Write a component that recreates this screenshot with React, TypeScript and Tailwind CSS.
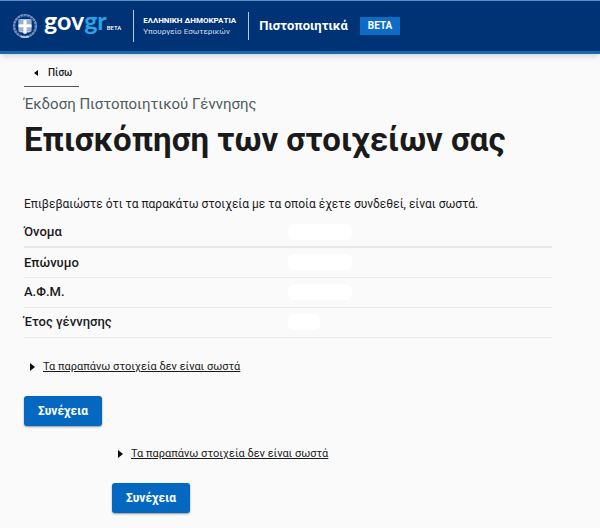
const ROWS = [
  { key: 'name', label: 'Όνομα', valueWidth: 'w-16', line: 'border-b-2 border-[#e6e6e6]' },
  { key: 'surname', label: 'Επώνυμο', valueWidth: 'w-16', line: 'border-b border-[#ebebeb]' },
  { key: 'afm', label: 'Α.Φ.Μ.', valueWidth: 'w-16', line: 'border-b border-[#ebebeb]' },
  { key: 'year', label: 'Έτος γέννησης', valueWidth: 'w-8', line: 'border-b border-[#ebebeb]' },
];

function Emblem() {
  return (
    <svg className="size-[26px] shrink-0" viewBox="0 0 26 26" fill="none" role="img" aria-label="Εθνόσημο">
      <circle cx="13" cy="13" r="10.800" stroke="#9fb6d8" strokeWidth="2.6" strokeDasharray="2.6 0.7" opacity="0.6" />
      <circle cx="13" cy="13" r="11.400" stroke="#8aa5cf" strokeWidth="1" opacity="0.6" />
      <path d="M6.500 6.500q3.200-1 6.500 0q3.300-1 6.500 0v11.500q-1 1.500-4 1.500l-2.500 1.500l-2.500-1.500q-3 0-4-1.500z" fill="#b9cbe6" />
      <path d="M7 8h4.500M7 10h4.500M14.500 8H19M14.500 10H19M7 15.200h4.500M7 17.200h4.500M14.500 15.200H19M14.500 17.200H19" stroke="#7391c6" strokeWidth="0.900" />
      <path d="M11.500 6.500h3v14h-3zM6.500 11.500h13v2.700h-13z" fill="#fff" />
      <path d="M9 23.500q4 1.500 8 0" stroke="#c3d2ea" strokeWidth="1.500" />
    </svg>
  );
}

function Header() {
  return (
    <header className="flex h-[54px] items-center border-t border-b-3 border-t-[#5f8cc4] border-b-[#156ca9] bg-[#003375] pl-3 text-white shadow-md">
      <a href="#home" className="flex items-center gap-[6px] pr-3">
        <Emblem />
        <span className="flex items-baseline pb-1 font-['Lato',sans-serif] text-[25px] leading-7 font-bold">
          gov<span className="text-[#2ba3e6]">gr</span>
          <span className="font-['Roboto',sans-serif] text-[6px] font-medium">BETA</span>
        </span>
      </a>
      <div className="flex h-8 items-center border-l border-[#b8c7de] pl-[9px] whitespace-nowrap">
        <div className="flex flex-col pr-3">
          <span className="text-[8px] leading-[11px] font-bold">ΕΛΛΗΝΙΚΗ ΔΗΜΟΚΡΑΤΙΑ</span>
          <span className="text-[8px] leading-[11px] text-[#d5deec]">Υπουργείο Εσωτερικών</span>
        </div>
      </div>
      <div className="flex h-7 items-center gap-3 border-l border-[#b8c7de] pl-[10px]">
        <span className="text-[13px] leading-5 font-bold">Πιστοποιητικά</span>
        <span className="bg-[#0d6cc4] px-2 text-[10px] leading-[18px] font-bold">BETA</span>
      </div>
    </header>
  );
}

function Actions() {
  return (
    <div className="flex flex-col items-start gap-[21px]">
      <details>
        <summary className="flex cursor-pointer list-none items-center gap-2 pl-[6px]">
          <svg className="h-2 w-[5px]" viewBox="0 0 5 8" fill="#0b0c0c">
            <path d="M0 0l5 4-5 4z" />
          </svg>
          <span className="text-[11px] leading-4 underline underline-offset-1">Τα παραπάνω στοιχεία δεν είναι σωστά</span>
        </summary>
      </details>
      <button
        type="button"
        className="cursor-pointer rounded-[3px] bg-[#0568c0] px-[14px] text-[12px] leading-[30px] font-bold text-white shadow-[0_1px_2px_rgba(0,0,0,0.4)]"
      >
        Συνέχεια
      </button>
    </div>
  );
}

export default function App() {
  return (
    <div className="min-h-screen bg-[#fafafa] font-['Roboto',sans-serif] text-[#1a1a1a]">
      <Header />
      <main className="px-6 pt-3 pb-4">
        <nav className="flex">
          <a
            href="#back"
            className="flex items-center gap-[10px] border-b border-[#555] pr-[7px] pb-[6px] pl-[10px] text-[10px] leading-[14px] font-medium"
          >
            <svg className="h-[6px] w-1" viewBox="0 0 4 6" fill="#0b0c0c">
              <path d="M4 0L0 3l4 3z" />
            </svg>
            Πίσω
          </a>
        </nav>
        <h1 className="pt-[5px]">
          <span className="block text-[15px] leading-6 text-[#505a5f]">Έκδοση Πιστοποιητικού Γέννησης</span>
          <span className="block text-[33px] leading-12 font-bold">Επισκόπηση των στοιχείων σας</span>
        </h1>
        <p className="pt-7 pb-px text-[12px] leading-6">
          Επιβεβαιώστε ότι τα παρακάτω στοιχεία με τα οποία έχετε συνδεθεί, είναι σωστά.
        </p>
        <table className="w-[calc(100%-24px)] table-fixed border-collapse text-left text-[13px]">
          <tbody>
            {ROWS.map(({ key, label, valueWidth, line }) => (
              <tr key={key} className={`h-[30px] ${line}`}>
                <th scope="row" className="w-1/2 font-medium">
                  {label}
                </th>
                <td>
                  <span className={`block h-4 rounded-md bg-white ${valueWidth}`} />
                </td>
              </tr>
            ))}
          </tbody>
        </table>
        <div className="flex flex-col gap-5 pt-[21px]">
          <Actions />
          <div className="pl-[88px]">
            <Actions />
          </div>
        </div>
      </main>
    </div>
  );
}
